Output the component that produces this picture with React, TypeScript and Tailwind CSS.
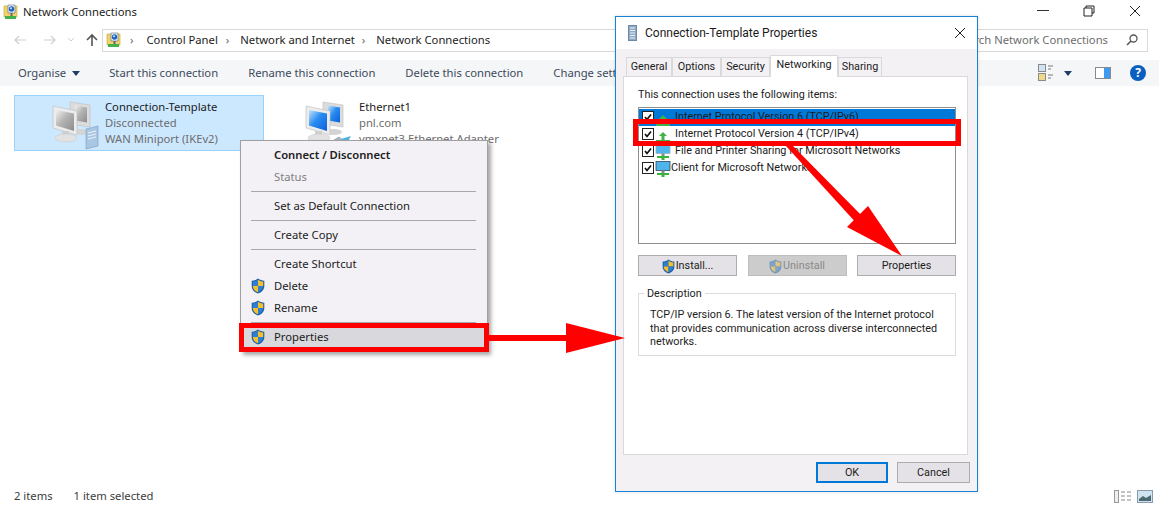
import type { ReactNode } from "react";

function Shield({ faded = false, size = 14 }: { faded?: boolean; size?: number }) {
  return (
    <svg width={size} height={size + 2} viewBox="0 0 14 16" className={faded ? "shrink-0 opacity-50" : "shrink-0"}>
      <path d="M7 .5C5 2 3 2.6.7 2.7v5.5C.7 11.700 3.500 14.300 7 15.600c3.500-1.300 6.300-3.900 6.300-7.400V2.700C11 2.600 9 2 7 .5z" fill="#1c5fa8" />
      <path d="M7 1.700V8H1.800V3.600C3.700 3.400 5.400 2.800 7 1.700z" fill="#2f7fd0" />
      <path d="M7 1.700C8.600 2.800 10.300 3.400 12.200 3.600V8H7z" fill="#f6c02c" />
      <path d="M1.800 8H7v6.300C4.200 13.100 1.800 11 1.800 8z" fill="#f6c02c" />
      <path d="M7 8h5.200c0 3-2.400 5.100-5.200 6.300z" fill="#2f7fd0" />
    </svg>
  );
}

function NetworkFolderIcon({ size = 16 }: { size?: number }) {
  return (
    <svg width={size} height={size} viewBox="0 0 16 16" className="shrink-0">
      <path d="M1 2h13v11H1z" fill="#f0d267" stroke="#c2a53c" strokeWidth="0.6" />
      <path d="M5 1h7v8H5z" fill="#e8eef6" stroke="#5f6b7a" strokeWidth="0.6" />
      <circle cx="8.500" cy="5" r="2.700" fill="#1d63c4" />
      <circle cx="8" cy="4.300" r="1" fill="#cfe6fb" />
      <rect x="7.500" y="9" width="2" height="3" fill="#5f6b7a" />
      <path d="M2 12h11v3H2z" fill="#43b14b" />
    </svg>
  );
}

function Monitors({ tone }: { tone: "gray" | "blue" }) {
  const dark = tone === "gray" ? "#8c8c8c" : "#0a5fdc";
  const mid = tone === "gray" ? "#b4b4b4" : "#2a8cf0";
  const light = tone === "gray" ? "#f2f2f2" : "#c4e6fb";
  const id = tone === "gray" ? "scr-gray" : "scr-blue";
  return (
    <svg width="48" height="48" viewBox="0 0 48 48" className="shrink-0">
      <defs>
        <linearGradient id={id} x1="0" y1="0" x2="1" y2="1">
          <stop offset="0" stopColor={light} />
          <stop offset="0.45" stopColor={mid} />
          <stop offset="1" stopColor={dark} />
        </linearGradient>
      </defs>
      <path d="M20 3l20 3v22l-20-3z" fill="#dcdcdc" stroke="#bdbdbd" strokeWidth="0.6" />
      <path d="M25 6.500l12 2v15l-12-2z" fill={`url(#${id})`} />
      <ellipse cx="31" cy="33" rx="8" ry="3" fill="#d4d4d4" />
      <path d="M3 7l24 5v24L3 29z" fill="#ececec" stroke="#bcbcbc" strokeWidth="0.6" />
      <path d="M6 11l18 3.500v17.500L6 26.500z" fill={`url(#${id})`} />
      <rect x="12" y="32" width="7" height="5" fill="#cfcfcf" />
      <ellipse cx="16" cy="39" rx="11" ry="4" fill="#e2e2e2" stroke="#c4c4c4" strokeWidth="0.5" />
    </svg>
  );
}

function Arrows() {
  return (
    <svg width="1159" height="508" viewBox="0 0 1159 508" className="absolute left-0 top-0 pointer-events-none">
      <rect x="488" y="335" width="82" height="6" fill="#fe0000" />
      <path d="M566 323L625 338L566 353z" fill="#fe0000" />
      <path d="M786 146L793 146L866 220L859 226z" fill="#fe0000" />
      <path d="M868 206L902 256L847 227z" fill="#fe0000" />
    </svg>
  );
}

function MenuRow({ children, icon, className = "" }: { children: ReactNode; icon?: boolean; className?: string }) {
  return (
    <div className={`flex h-[22px] items-center pl-[10px] ${className}`}>
      <span className="flex w-[23px] shrink-0 items-center">{icon && <Shield />}</span>
      {children}
    </div>
  );
}

function MenuSep() {
  return (
    <div className="flex h-[7px] items-center pl-[10px] pr-[11px]">
      <div className="h-px w-full bg-[#a8a8a8]" />
    </div>
  );
}

function ContextMenu() {
  return (
    <div className="absolute left-[240px] top-[140px] h-[212px] w-[248px] border border-[#a0a0a0] bg-[#f3f1f5] py-[3px] text-[#1c1c1c] shadow-[3px_3px_4px_rgba(0,0,0,0.35)]">
      <MenuRow className="font-semibold">Connect / Disconnect</MenuRow>
      <MenuRow className="text-[#7f7f7f]">Status</MenuRow>
      <MenuSep />
      <MenuRow>Set as Default Connection</MenuRow>
      <MenuSep />
      <MenuRow>Create Copy</MenuRow>
      <MenuSep />
      <MenuRow>Create Shortcut</MenuRow>
      <MenuRow icon>Delete</MenuRow>
      <MenuRow icon>Rename</MenuRow>
      <MenuSep />
      <MenuRow icon className="bg-[#d9d8dc]">Properties</MenuRow>
      <div className="absolute left-[-2px] top-[182px] h-[29px] w-[250px] border-[5px] border-[#fe0000]" />
    </div>
  );
}

function Tab({ label, active = false, width }: { label: string; active?: boolean; width: string }) {
  return (
    <div
      className={`flex items-center justify-center border border-b-0 border-[#d9d9d9] ${width} ${
        active ? "z-10 -mb-px h-[22px] bg-white pb-[2px]" : "mt-[2px] h-[19px] bg-[#f3f1f4] pt-[1px]"
      }`}
    >
      {label}
    </div>
  );
}

function PlugIcon() {
  return (
    <svg width="16" height="16" viewBox="0 0 16 16" className="ml-px mr-[4px] mt-[8px] shrink-0 overflow-visible">
      <path d="M8 1l4 4h-2.500v4H15v3H1V9h5.500V5H4z" fill="#43b14b" />
    </svg>
  );
}

function NetIcon({ dark = false }: { dark?: boolean }) {
  return (
    <svg width="16" height="16" viewBox="0 0 16 16" className={`ml-px shrink-0 ${dark ? "" : "mr-[4px]"}`}>
      <rect x="1" y="0.500" width="14" height="9" fill="#4fb4ec" stroke={dark ? "#33465a" : "#8fb4c8"} strokeWidth="0.8" />
      <rect x="6.500" y="9.500" width="3" height="3" fill="#7c8a92" />
      <path d="M2 12h12v2H9.500v2h-3v-2H2z" fill="#3bb33b" />
    </svg>
  );
}

function ListRow({ label, icon, className = "" }: { label: string; icon: ReactNode; className?: string }) {
  return (
    <div className={`flex h-[17px] items-center pl-[3px] ${className}`}>
      <span className="-mt-[1px] flex h-[12px] w-[12px] shrink-0 items-center justify-center border border-[#222] bg-white">
        <svg width="10" height="10" viewBox="0 0 10 10">
          <path d="M2 5l2 2.500L8 2.500" fill="none" stroke="#111" strokeWidth="1.700" />
        </svg>
      </span>
      {icon}
      <span className="whitespace-nowrap">{label}</span>
    </div>
  );
}

function DlgButton({ children, kind = "normal", className = "" }: { children: ReactNode; kind?: "normal" | "disabled" | "default"; className?: string }) {
  const look =
    kind === "disabled"
      ? "border border-[#bdbdbd] bg-[#cccccc] text-[#8a8a8a]"
      : kind === "default"
        ? "border-2 border-[#0078d7] bg-[#e4e2e6]"
        : "border border-[#adadad] bg-[#e4e2e6]";
  return <div className={`flex h-[21px] items-center justify-center gap-[1px] pt-[1px] ${look} ${className}`}>{children}</div>;
}

function PropertiesDialog() {
  return (
    <div className="absolute left-[615px] top-[16px] flex h-[476px] w-[363px] flex-col border border-[#1883d7] bg-[#f3f1f4] font-['Roboto',sans-serif] text-[10.800px] text-[#1c1c1c] shadow-[0_0_3px_rgba(0,0,0,0.15)]">
      <div className="flex h-[32px] shrink-0 items-center bg-white pl-[12px] pr-[11px] text-[12px]">
        <svg width="9" height="16" viewBox="0 0 9 16" className="mr-[8px] shrink-0">
          <rect x="0.500" y="0.500" width="8" height="15" fill="#8fa9c4" stroke="#6d88a8" />
          <path d="M2 3h5M2 5.500h5M2 8h5M2 10.500h5M2 13h5" stroke="#e9f0f7" strokeWidth="1" />
        </svg>
        <span className="grow">Connection-Template Properties</span>
        <svg width="12" height="12" viewBox="0 0 12 12">
          <path d="M1 1l10 10M11 1L1 11" stroke="#222" strokeWidth="1" />
        </svg>
      </div>
      <div className="flex w-[352px] flex-col pl-[7px] pt-[6px]">
        <div className="flex h-[21px] items-end pl-[3px]">
          <Tab label="General" width="w-[46px]" />
          <Tab label="Options" width="w-[49px]" />
          <Tab label="Security" width="w-[49px]" />
          <Tab label="Networking" active width="w-[68px]" />
          <Tab label="Sharing" width="w-[44px]" />
        </div>
        <div className="flex h-[379px] flex-col border border-[#d9d9d9] bg-white pl-[14px] pr-[11px] pt-[10px]">
          <p className="h-[17px] leading-[15px]">This connection uses the following items:</p>
          <div className="mt-[3px] h-[137px] border border-[#8f8f8f] bg-white pt-[1px]">
            <ListRow label="Internet Protocol Version 6 (TCP/IPv6)" icon={<PlugIcon />} className="bg-[#0078d7]" />
            <ListRow label="Internet Protocol Version 4 (TCP/IPv4)" icon={<PlugIcon />} />
            <ListRow label="File and Printer Sharing for Microsoft Networks" icon={<NetIcon />} />
            <ListRow label="Client for Microsoft Networks" icon={<NetIcon dark />} />
          </div>
          <div className="mt-[11px] flex justify-between">
            <DlgButton className="w-[99px]">
              <Shield size={13} />
              Install...
            </DlgButton>
            <DlgButton kind="disabled" className="w-[99px]">
              <Shield faded size={13} />
              Uninstall
            </DlgButton>
            <DlgButton className="w-[99px]">Properties</DlgButton>
          </div>
          <div className="relative mt-[17px] h-[63px] border border-[#dcdcdc] pl-[11px] pr-[8px] pt-[14px] leading-[13.500px]">
            <span className="absolute left-[5px] top-[-7px] bg-white px-[3px] leading-[14px]">Description</span>
            <p>
              TCP/IP version 6. The latest version of the Internet protocol that provides communication across diverse interconnected networks.
            </p>
          </div>
        </div>
      </div>
      <div className="flex justify-end gap-[9px] pr-[7px] pt-[7px]">
        <DlgButton kind="default" className="w-[72px]">OK</DlgButton>
        <DlgButton className="w-[73px]">Cancel</DlgButton>
      </div>
      <div className="absolute left-[17px] top-[102px] h-[27px] w-[328px] border-[5px] border-[#fe0000]" />
    </div>
  );
}

function ConnectionItem({ tone, title, lines, selected = false, className = "" }: { tone: "gray" | "blue"; title: string; lines: string[]; selected?: boolean; className?: string }) {
  return (
    <div className={`flex h-[56px] items-center border ${selected ? "border-[#99d1ff] bg-[#cce8ff]" : "border-transparent"} ${className}`}>
      <div className="relative h-[48px] w-[48px]">
        <Monitors tone={tone} />
        {tone === "gray" ? (
          <svg width="17" height="25" viewBox="0 0 17 25" className="absolute bottom-[-3px] right-[-3px]">
            <path d="M2 4l12-3v20l-12 3z" fill="#a9c6e2" stroke="#7c9cbc" strokeWidth="0.6" />
            <path d="M4 8l8-2M4 11l8-2M4 14l8-2" stroke="#eef5fb" />
          </svg>
        ) : (
          <svg width="28" height="18" viewBox="0 0 28 18" className="absolute bottom-[-6px] right-[-2px]">
            <path d="M1 10l13-8 5 4L7 16H1z" fill="#a8b8c8" stroke="#7a8a9a" strokeWidth="0.6" />
            <path d="M4 11l9-6M6 13l9-6" stroke="#e4eaf0" strokeWidth="0.7" />
            <path d="M16 4l10-3-4 7z" fill="#4db5dd" />
          </svg>
        )}
      </div>
      <div className={`flex flex-col whitespace-nowrap leading-[16px] ${tone === "gray" ? "ml-[7px]" : "ml-[8px]"}`}>
        <span className="text-[#1c1c1c]">{title}</span>
        {lines.map((l) => (
          <span key={l} className="text-[#6d6d6d]">{l}</span>
        ))}
      </div>
    </div>
  );
}

export default function App() {
  return (
    <div className="relative flex h-[508px] w-[1159px] flex-col overflow-hidden bg-white font-['Noto_Sans',sans-serif] text-[11.250px] text-[#1c1c1c]">
      {/* title bar */}
      <div className="flex h-[24px] shrink-0 items-center pl-[3px]">
        <NetworkFolderIcon />
        <span className="ml-[4px] grow">Network Connections</span>
        <svg width="14" height="2" viewBox="0 0 14 2" className="mb-[3px] mr-[32px]"><rect width="12" height="1" fill="#333" /></svg>
        <svg width="12" height="12" viewBox="0 0 12 12" className="mb-[3px] mr-[34px]">
          <path d="M3 3V1h8v7H9M1 3h8v8H1z" fill="none" stroke="#222" />
        </svg>
        <svg width="12" height="12" viewBox="0 0 12 12" className="mb-[3px] mr-[18px]">
          <path d="M1 1l10 10M11 1L1 11" stroke="#222" />
        </svg>
      </div>

      {/* address row */}
      <div className="mt-[4px] flex h-[24px] shrink-0 items-center pl-[13px] pr-[11px]">
        <svg width="14" height="12" viewBox="0 0 14 12"><path d="M13 6H2M6 2L2 6l4 4" fill="none" stroke="#cfcfcf" strokeWidth="1.200" /></svg>
        <svg width="14" height="12" viewBox="0 0 14 12" className="ml-[16px]"><path d="M1 6h11M8 2l4 4-4 4" fill="none" stroke="#cfcfcf" strokeWidth="1.200" /></svg>
        <svg width="8" height="6" viewBox="0 0 8 6" className="ml-[10px]"><path d="M1 1l3 3 3-3" fill="none" stroke="#cfcfcf" /></svg>
        <svg width="14" height="14" viewBox="0 0 14 14" className="ml-[10px]"><path d="M7 13V2M2 7l5-5 5 5" fill="none" stroke="#555" strokeWidth="1.600" /></svg>
        <div className="ml-[3px] flex h-[23px] grow items-center border border-[#d9d9d9] pl-[3px] pr-[8px]">
          <NetworkFolderIcon />
          <span className="ml-[8px] text-[#666]">›</span>
          <span className="ml-[13px]">Control Panel</span>
          <span className="ml-[8px] text-[#666]">›</span>
          <span className="ml-[11px]">Network and Internet</span>
          <span className="ml-[7px] text-[#666]">›</span>
          <span className="ml-[11px] grow">Network Connections</span>
          <span className="text-[#6d6d6d]">Search Network Connections</span>
          <svg width="14" height="14" viewBox="0 0 14 14" className="ml-[17px]">
            <circle cx="8.500" cy="5.500" r="3.500" fill="none" stroke="#555" strokeWidth="1.300" />
            <path d="M6 8l-4 4" stroke="#555" strokeWidth="1.600" />
          </svg>
        </div>
      </div>

      {/* toolbar */}
      <div className="mt-[8px] flex h-[26px] shrink-0 items-center bg-[#f5f6f7] pl-[18px] pr-[13px] text-[#3c4a5c]">
        <span>Organise</span>
        <svg width="8" height="5" viewBox="0 0 8 5" className="ml-[6px] mr-[29px]"><path d="M0 0h8L4 5z" fill="#1f3d66" /></svg>
        <div className="flex grow gap-[30px]">
          <span className="whitespace-nowrap">Start this connection</span>
          <span className="whitespace-nowrap">Rename this connection</span>
          <span className="whitespace-nowrap">Delete this connection</span>
          <span className="whitespace-nowrap">Change sett</span>
        </div>
        <svg width="16" height="18" viewBox="0 0 16 18">
          <rect x="0.500" y="0.500" width="7" height="7" fill="#cfe3f5" stroke="#8a8a8a" />
          <rect x="0.500" y="9.500" width="7" height="7" fill="#f0d98a" stroke="#8a8a8a" />
          <path d="M10 2h5M10 5h3M10 11h5M10 14h3" stroke="#777" />
        </svg>
        <svg width="8" height="5" viewBox="0 0 8 5" className="ml-[10px]"><path d="M0 0h8L4 5z" fill="#1f3d66" /></svg>
        <svg width="16" height="12" viewBox="0 0 16 12" className="ml-[23px]">
          <rect x="0.500" y="0.500" width="15" height="11" fill="#fff" stroke="#8a8a8a" />
          <rect x="9" y="1" width="6" height="10" fill="#3f9bef" />
        </svg>
        <div className="ml-[19px] flex h-[16px] w-[16px] items-center justify-center rounded-full bg-[#0a5fc0] text-[12px] font-bold text-white">?</div>
      </div>

      {/* items */}
      <div className="flex grow items-start gap-[38px] pl-[14px] pt-[9px]">
        <ConnectionItem tone="gray" selected title="Connection-Template" lines={["Disconnected", "WAN Miniport (IKEv2)"]} className="w-[250px] pl-[35px]" />
        <ConnectionItem tone="blue" title="Ethernet1" lines={["pnl.com", "vmxnet3 Ethernet Adapter"]} />
      </div>

      {/* status bar */}
      <div className="flex h-[24px] shrink-0 items-center pl-[14px] pr-[6px] text-[#3c3c3c]">
        <span>2 items</span>
        <span className="ml-[21px] grow">1 item selected</span>
        <svg width="17" height="13" viewBox="0 0 17 13">
          <rect x="0.500" y="0.500" width="4" height="12" fill="#eee" stroke="#999" />
          <path d="M7 2h4M13 2h4M7 6h4M13 6h4M7 10h4M13 10h4" stroke="#888" />
        </svg>
        <svg width="16" height="13" viewBox="0 0 16 13" className="ml-[6px]">
          <rect x="0.500" y="0.500" width="15" height="12" fill="#cfe3f0" stroke="#8a9aa8" />
          <path d="M2 9l4-3 3 2 5-3v6H2z" fill="#4a6a70" />
        </svg>
      </div>

      <ContextMenu />
      <PropertiesDialog />
      <Arrows />
    </div>
  );
}
